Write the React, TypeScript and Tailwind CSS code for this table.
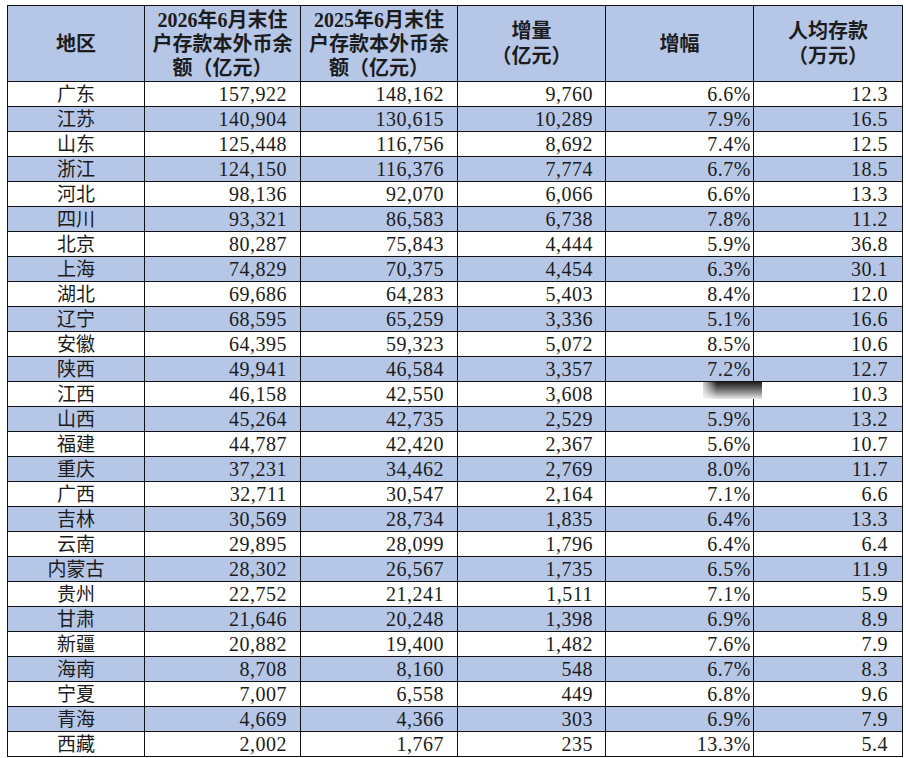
const ROWS: [string, string, string, string, string, string][] = [
  ['广东', '157,922', '148,162', '9,760', '6.6%', '12.3'],
  ['江苏', '140,904', '130,615', '10,289', '7.9%', '16.5'],
  ['山东', '125,448', '116,756', '8,692', '7.4%', '12.5'],
  ['浙江', '124,150', '116,376', '7,774', '6.7%', '18.5'],
  ['河北', '98,136', '92,070', '6,066', '6.6%', '13.3'],
  ['四川', '93,321', '86,583', '6,738', '7.8%', '11.2'],
  ['北京', '80,287', '75,843', '4,444', '5.9%', '36.8'],
  ['上海', '74,829', '70,375', '4,454', '6.3%', '30.1'],
  ['湖北', '69,686', '64,283', '5,403', '8.4%', '12.0'],
  ['辽宁', '68,595', '65,259', '3,336', '5.1%', '16.6'],
  ['安徽', '64,395', '59,323', '5,072', '8.5%', '10.6'],
  ['陕西', '49,941', '46,584', '3,357', '7.2%', '12.7'],
  ['江西', '46,158', '42,550', '3,608', '', '10.3'],
  ['山西', '45,264', '42,735', '2,529', '5.9%', '13.2'],
  ['福建', '44,787', '42,420', '2,367', '5.6%', '10.7'],
  ['重庆', '37,231', '34,462', '2,769', '8.0%', '11.7'],
  ['广西', '32,711', '30,547', '2,164', '7.1%', '6.6'],
  ['吉林', '30,569', '28,734', '1,835', '6.4%', '13.3'],
  ['云南', '29,895', '28,099', '1,796', '6.4%', '6.4'],
  ['内蒙古', '28,302', '26,567', '1,735', '6.5%', '11.9'],
  ['贵州', '22,752', '21,241', '1,511', '7.1%', '5.9'],
  ['甘肃', '21,646', '20,248', '1,398', '6.9%', '8.9'],
  ['新疆', '20,882', '19,400', '1,482', '7.6%', '7.9'],
  ['海南', '8,708', '8,160', '548', '6.7%', '8.3'],
  ['宁夏', '7,007', '6,558', '449', '6.8%', '9.6'],
  ['青海', '4,669', '4,366', '303', '6.9%', '7.9'],
  ['西藏', '2,002', '1,767', '235', '13.3%', '5.4'],
]

// right padding per numeric column, as in the sheet
const PAD = ['', 'pr-[13px]', 'pr-[13px]', 'pr-[12px]', 'pr-[2px]', 'pr-[14px]']

export default function App () {
  return (
    <div className="w-[906px] h-[758px] overflow-hidden bg-white pl-[7px] pt-[5px] text-[#1c1c1c] font-['Liberation_Serif','Noto_Sans_CJK_SC',serif]">
      <div className="relative w-[896px]">
        <div className="grid grid-cols-[137px_156px_157px_148px_148px_149px] border-t border-l border-[#111]">
          {/* 表头 */}
          <div className="h-[76px] bg-[#b5c6e7] border-r border-b border-[#111] flex items-center justify-center text-[20px] font-bold">
            地区
          </div>
          <div className="h-[76px] bg-[#b5c6e7] border-r border-b border-[#111] flex items-center justify-center text-center text-[20px] font-bold leading-[24px] px-1">
            2026年6月末住<br />户存款本外币余<br />额（亿元）
          </div>
          <div className="h-[76px] bg-[#b5c6e7] border-r border-b border-[#111] flex items-center justify-center text-center text-[20px] font-bold leading-[24px] px-1">
            2025年6月末住<br />户存款本外币余<br />额（亿元）
          </div>
          <div className="h-[76px] bg-[#b5c6e7] border-r border-b border-[#111] flex items-center justify-center text-center text-[20px] font-bold leading-[25px]">
            增量<br />（亿元）
          </div>
          <div className="h-[76px] bg-[#b5c6e7] border-r border-b border-[#111] flex items-center justify-center text-[20px] font-bold">
            增幅
          </div>
          <div className="h-[76px] bg-[#b5c6e7] border-r border-b border-[#111] flex items-center justify-center text-center text-[20px] font-bold leading-[25px]">
            人均存款<br />（万元）
          </div>

          {/* 数据行 */}
          {ROWS.map((row, i) => {
            const bg = i % 2 === 1 ? 'bg-[#b5c6e7]' : 'bg-white'
            return row.map((cell, j) => (
              <div
                key={i + '-' + j}
                className={
                  j === 0
                    ? `h-[25px] ${bg} border-r border-b border-[#111] flex items-center justify-center text-[19px] leading-none`
                    : `h-[25px] ${bg} border-r border-b border-[#111] flex items-center justify-end text-[20px] leading-none tracking-[0.5px] ${PAD[j]}`
                }
              >
                {cell}
              </div>
            ))
          })}
        </div>

        {/* 图片上的涂抹痕迹 */}
        <div className="absolute left-[696px] top-[377px] w-[59px] h-[17px] bg-gradient-to-b from-[#1e1e1e] via-[#7a7a7a] to-[#ececec]">
          <div className="h-full w-[14px] bg-gradient-to-r from-white/80 to-transparent" />
        </div>
      </div>
    </div>
  )
}
